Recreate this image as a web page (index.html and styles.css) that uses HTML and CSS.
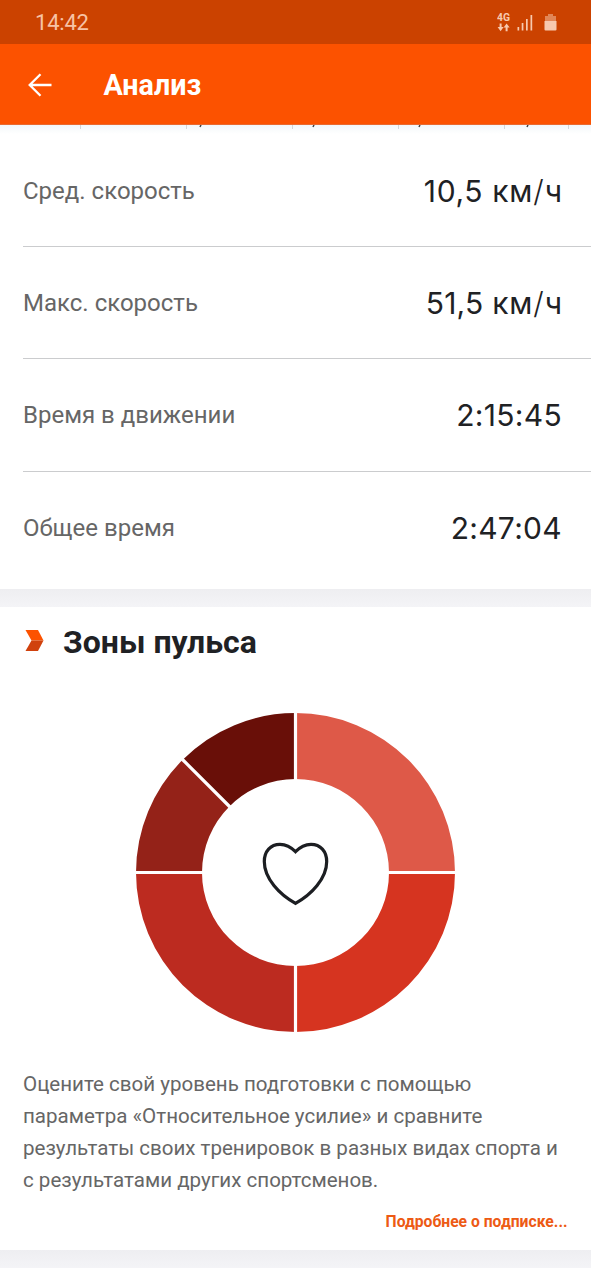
FILE: index.html
```html
<!DOCTYPE html>
<html lang="ru">
<head>
<meta charset="utf-8">
<title>Анализ</title>
<link rel="stylesheet" href="styles.css">
</head>
<body>
<div class="status">
  <span class="clock">14:42</span>
  <svg class="status-icons" width="64" height="24" viewBox="0 0 64 24" fill="#f7c9ae">
    <text class="net" x="0" y="10.3" textLength="13" lengthAdjust="spacingAndGlyphs">4G</text>
    <path d="M2.600 12.500h2v3.500h2L3.600 20.200.6 16h2zM8.600 20.200v-3.700h-2l3-4 3 4h-2v3.700z"/>
    <path d="M20.500 16h1.700v3.500h-1.700zM24.700 12h1.700v7.500h-1.700zM29 8h1.700v11.500H29zM33.500 4h1.700v15.500h-1.700z"/>
    <path opacity=".5" d="M51 3h5v2h3v5H48V5h3z"/><path d="M47.500 10h12v8.500q0 1-1 1h-10q-1 0-1-1z"/>
  </svg>
</div>
<header class="appbar">
  <svg class="back" width="26" height="26" viewBox="0 0 26 26" fill="none" stroke="#fff" stroke-width="2.300"><path d="M24.500 13H3M13.500 2.200 2.700 13l10.800 10.800"/></svg>
  <h1 class="title">Анализ</h1>
</header>
<main>
  <svg class="axis" width="591" height="9" viewBox="0 0 591 9">
    <path d="M80.500 0v4M186.500 0v4M292.500 0v4M398.500 0v4M504.500 0v4M568.500 0v4" stroke="#d4d5d7"/>
    <path d="M201 0l-1 2M314 0l-1 2M420 0l-1 2M528 0l-1 2" stroke="#444" stroke-width="1.500"/>
  </svg>
  <section class="stats">
    <div class="row"><span class="label">Сред. скорость</span><span class="value speed avg">10,5 <span class="unit">км<span class="slash">/</span>ч</span></span></div>
    <div class="row"><span class="label">Макс. скорость</span><span class="value speed">51,5 <span class="unit">км<span class="slash">/</span>ч</span></span></div>
    <div class="row lower"><span class="label">Время в движении</span><span class="value time">2:15:45</span></div>
    <div class="row last"><span class="label">Общее время</span><span class="value time">2:47:04</span></div>
  </section>
  <div class="band"></div>
  <section class="zones">
    <div class="heading">
      <svg width="19" height="21" viewBox="0 0 19 21"><path fill="#fc5200" d="M.5 0H13l5.500 10.500H6.500z"/><path fill="#d0410d" d="M6.500 10.500h12L13 21H.5z"/></svg>
      <h2>Зоны пульса</h2>
    </div>
    <svg class="donut" width="321" height="321" viewBox="-160.500 -160.500 321 321">
      <path fill="#de5948" d="M0-159.500A159.500 159.500 0 0 1 159.500 0H93.500A93.500 93.500 0 0 0 0-93.500z"/>
      <path fill="#d63420" d="M159.500 0A159.500 159.500 0 0 1 0 159.500V93.500A93.500 93.500 0 0 0 93.500 0z"/>
      <path fill="#bc2b20" d="M0 159.500A159.500 159.500 0 0 1-159.500 0H-93.500A93.500 93.500 0 0 0 0 93.500z"/>
      <path fill="#942218" d="M-159.500 0A159.500 159.500 0 0 1-112.800-112.800L-66.100-66.100A93.500 93.500 0 0 0-93.500 0z"/>
      <path fill="#690f08" d="M-112.800-112.800A159.500 159.500 0 0 1 0-159.500V-93.500A93.500 93.500 0 0 0-66.100-66.100z"/>
      <path stroke="#fff" stroke-width="3.200" d="M0-160V-92M0 92V160M-160 0H-92M92 0H160M-113.500-113.500L-65-65"/>
      <path fill="none" stroke="#1c1e22" stroke-width="3.200" d="M0-20.800C-5-26-10-28.200-15.500-28.200C-25-28.200-31.200-21-31.200-11C-31.200 6-16 22 0 30.800C16 22 31.200 6 31.200-11C31.200-21 25-28.200 15.500-28.200C10-28.200 5-26 0-20.800z"/>
    </svg>
    <p class="text">Оцените свой уровень подготовки с помощью<br>параметра «Относительное усилие» и сравните<br>результаты своих тренировок в разных видах спорта и<br>с результатами других спортсменов.</p>
    <a class="more">Подробнее о подписке...</a>
  </section>
  <div class="band"></div>
</main>
</body>
</html>
```
FILE: styles.css
```css
* { box-sizing: border-box; }
body { margin: 0; width: 591px; height: 1280px; overflow: hidden; background: #fff; font-family: Roboto, sans-serif; color: #202124; }
.status { height: 44px; background: #cb4200; display: flex; align-items: flex-start; justify-content: space-between; padding: 10px 30px 0 35px; }
.clock { font-size: 22px; line-height: 26px; color: #f7c3a5; letter-spacing: -.2px; }
.status-icons { margin-top: 1px; }
.net { font: 700 11px Roboto, sans-serif; }
.appbar { height: 81px; background: #fc5200; display: flex; align-items: center; padding: 0 0 0 27px; border-bottom: 1px solid #e96a30; }
.back { margin-top: 1px; }
.title { margin: 2px 0 0 50.5px; font-size: 28.7px; line-height: 34px; font-weight: 700; color: #fff; }
.axis { display: block; background: linear-gradient(#f2f7f9, #fff); }
.row { height: 112.5px; margin-left: 23px; padding: 2px 29px 0 0; display: flex; align-items: center; justify-content: space-between; border-bottom: 1px solid #cbccce; }
.row.lower { padding-top: 1px; }
.row.last { height: 117px; border: 0; padding: 1px 29px 6px 0; }
.label { font-size: 24px; color: #666; }
.value { font: 400 30px Inter, sans-serif; white-space: pre; }
.speed { letter-spacing: .2px; }
.avg { letter-spacing: .6px; }
.time { letter-spacing: .3px; }
.unit { font-weight: 400; letter-spacing: .9px; margin-right: -.9px; }
.slash { font-weight: 300; }
.band { height: 18px; background: linear-gradient(#eeeef1, #f4f4f7); }
.zones { height: 643px; display: flex; flex-direction: column; align-items: flex-start; }
.heading { display: flex; align-items: center; gap: 19px; height: 71px; padding: 0 0 3px 25px; }
h2 { margin: 2px 0 0; font-size: 32px; line-height: 38px; font-weight: 700; }
.donut { margin: 34px 0 0 135px; }
.text { margin: 35px 0 0 23px; font-size: 20.55px; line-height: 32px; color: #666; white-space: nowrap; }
.more { margin: 14px 23.5px 0 0; align-self: flex-end; font-size: 15.7px; line-height: 24px; font-weight: 700; color: #ed5a14; }
```
